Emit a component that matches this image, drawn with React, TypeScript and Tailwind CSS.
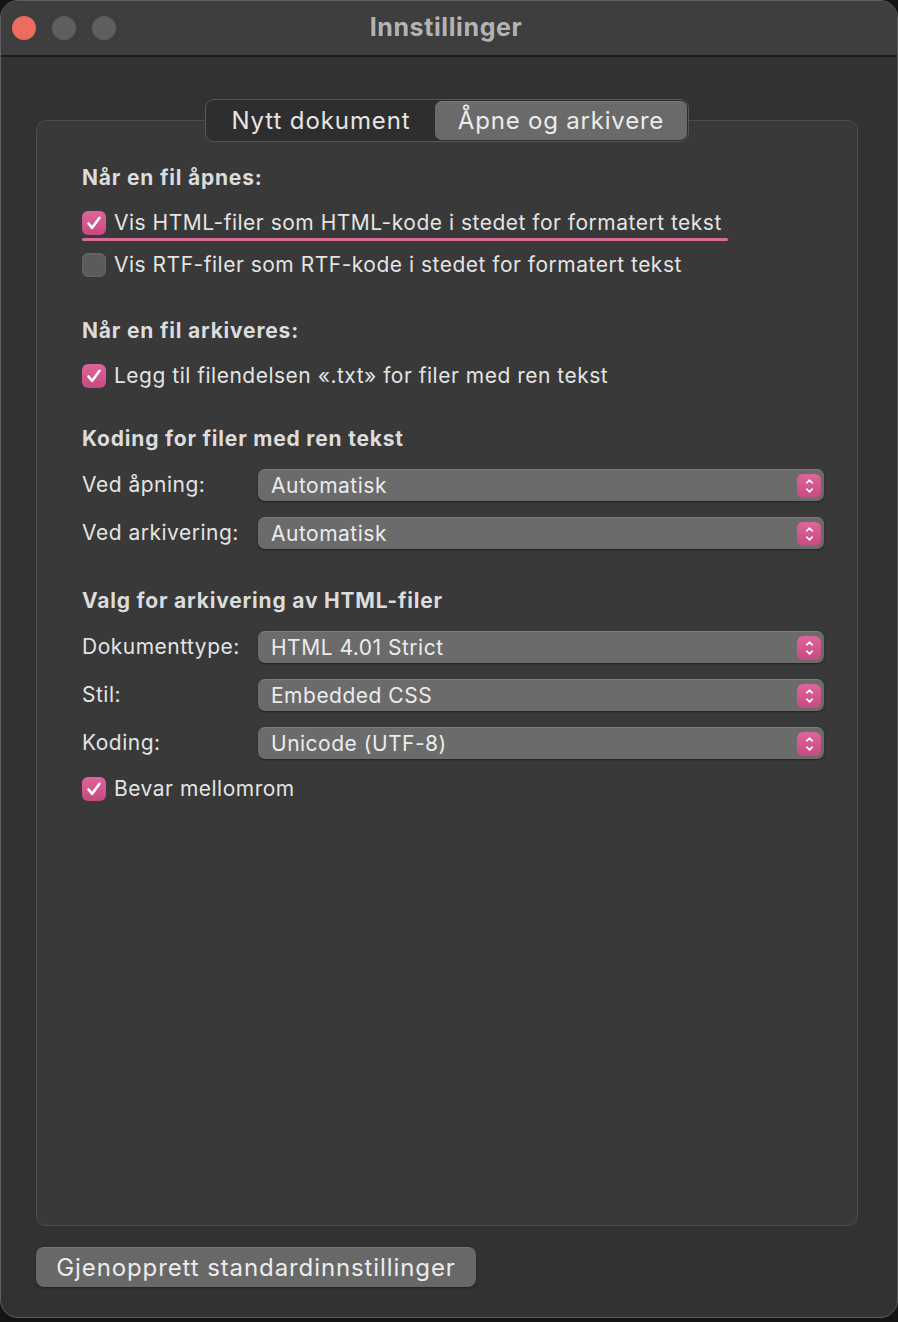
import { ChevronUp, ChevronDown } from 'lucide-react';

const font = { fontFamily: 'Inter, "Noto Sans", sans-serif' };

function Checkbox({ checked }: { checked: boolean }) {
    if (!checked) {
        return <div className="w-[24px] h-[24px] shrink-0 rounded-[6px] bg-[#5b5b5b] border border-[#666] shadow-[inset_0_1px_0_rgba(255,255,255,0.08)]" />;
    }
    return (
        <div className="w-[24px] h-[24px] shrink-0 rounded-[6px] bg-gradient-to-b from-[#e0649c] to-[#c44a82] flex items-center justify-center">
            <svg width="18" height="18" viewBox="0 0 18 18" fill="none">
                <path d="M3.5 9.5 L7.2 13.8 L14.5 3.8" stroke="white" strokeWidth="2.6" strokeLinecap="round" strokeLinejoin="round" />
            </svg>
        </div>
    );
}

function CheckRow({ checked, label, className = '', underline = false }: { checked: boolean; label: string; className?: string; underline?: boolean }) {
    return (
        <div className={`relative h-[32px] flex items-center gap-[8px] ${className}`}>
            <Checkbox checked={checked} />
            <span className="text-[21px] text-[#e4e4e4] tracking-[0.5px]">{label}</span>
            {underline && <div className="absolute left-0 w-[646px] bottom-[-2px] h-[3px] rounded-full bg-[#d96b97]" />}
        </div>
    );
}

function Heading({ children, className = '' }: { children: string; className?: string }) {
    return <div className={`h-[28px] flex items-center text-[21px] font-bold tracking-[0.8px] text-[#dcdcdc] ${className}`}>{children}</div>;
}

function SelectRow({ label, value, className = '' }: { label: string; value: string; className?: string }) {
    return (
        <div className={`h-[40px] flex items-center ${className}`}>
            <span className="w-[176px] shrink-0 text-[21px] tracking-[0.5px] text-[#e4e4e4]">{label}</span>
            <div className="w-[566px] h-[32px] rounded-[7px] bg-[#6b6b6b] border-t border-[#7c7c7c] shadow-[0_1px_2px_rgba(0,0,0,0.45)] flex items-center justify-between pl-[13px] pr-[3px]">
                <span className="text-[21px] tracking-[0.5px] text-[#ececec]">{value}</span>
                <div className="w-[24px] h-[24px] rounded-[6px] bg-gradient-to-b from-[#e0649c] to-[#c44a82] flex flex-col items-center justify-center text-white">
                    <ChevronUp size={11} strokeWidth={3.2} className="-mb-[1px]" />
                    <ChevronDown size={11} strokeWidth={3.2} className="-mt-[1px]" />
                </div>
            </div>
        </div>
    );
}

export default function App() {
    return (
        <div className="w-[898px] h-[1322px] bg-[#141414]" style={font}>
            <div className="w-[898px] h-[1318px] rounded-[18px] border border-[#5e5e5e] bg-[#323232] overflow-hidden flex flex-col">
                <div className="h-[56px] shrink-0 bg-[#3d3e3d] border-b-2 border-[#1c1c1c] flex items-center relative">
                    <div className="flex items-center gap-[16px] pl-[11px]">
                        <div className="w-[24px] h-[24px] rounded-full bg-[#ee6b5f]" />
                        <div className="w-[24px] h-[24px] rounded-full bg-[#5f5f5f]" />
                        <div className="w-[24px] h-[24px] rounded-full bg-[#5f5f5f]" />
                    </div>
                    <div className="absolute inset-0 flex items-center justify-center pr-[6px] text-[25px] font-bold tracking-[0.6px] text-[#b3b3b3] pointer-events-none">
                        Innstillinger
                    </div>
                </div>

                <div className="flex-1 flex flex-col pl-[35px] pr-[39px] pt-[42px]">
                    <div className="relative z-10 self-center flex items-stretch h-[43px] rounded-[9px] border border-[#575757] bg-[#2e2e2e] p-[1px]">
                        <div className="w-[228px] flex items-center justify-center text-[24px] tracking-[0.9px] text-[#e6e6e6]">Nytt dokument</div>
                        <div className="w-[252px] flex items-center justify-center text-[24px] tracking-[0.8px] text-[#ececec] bg-[#6a6a6a] rounded-[7px] border-t border-[#7a7a7a]">Åpne og arkivere</div>
                    </div>

                    <div className="mt-[-22px] h-[1106px] rounded-[10px] border border-[#4d4d4d] bg-[#383938] flex flex-col pl-[45px] pt-[43px]">
                        <Heading>Når en fil åpnes:</Heading>
                        <CheckRow checked label="Vis HTML-filer som HTML-kode i stedet for formatert tekst" className="mt-[15px]" underline />
                        <CheckRow checked={false} label="Vis RTF-filer som RTF-kode i stedet for formatert tekst" className="mt-[10px]" />

                        <Heading className="mt-[36px]">Når en fil arkiveres:</Heading>
                        <CheckRow checked label="Legg til filendelsen «.txt» for filer med ren tekst" className="mt-[15px]" />

                        <Heading className="mt-[33px]">Koding for filer med ren tekst</Heading>
                        <SelectRow label="Ved åpning:" value="Automatisk" className="mt-[12px]" />
                        <SelectRow label="Ved arkivering:" value="Automatisk" className="mt-[8px]" />

                        <Heading className="mt-[34px]">Valg for arkivering av HTML-filer</Heading>
                        <SelectRow label="Dokumenttype:" value="HTML 4.01 Strict" className="mt-[12px]" />
                        <SelectRow label="Stil:" value="Embedded CSS" className="mt-[8px]" />
                        <SelectRow label="Koding:" value="Unicode (UTF-8)" className="mt-[8px]" />
                        <CheckRow checked label="Bevar mellomrom" className="mt-[10px]" />
                    </div>

                    <button className="mt-[21px] self-start w-[440px] h-[40px] rounded-[8px] bg-[#686868] border-t border-[#777] shadow-[0_1px_2px_rgba(0,0,0,0.4)] text-[24px] tracking-[0.9px] text-[#ececec] flex items-center justify-center">
                        Gjenopprett standardinnstillinger
                    </button>
                </div>
            </div>
        </div>
    );
}
